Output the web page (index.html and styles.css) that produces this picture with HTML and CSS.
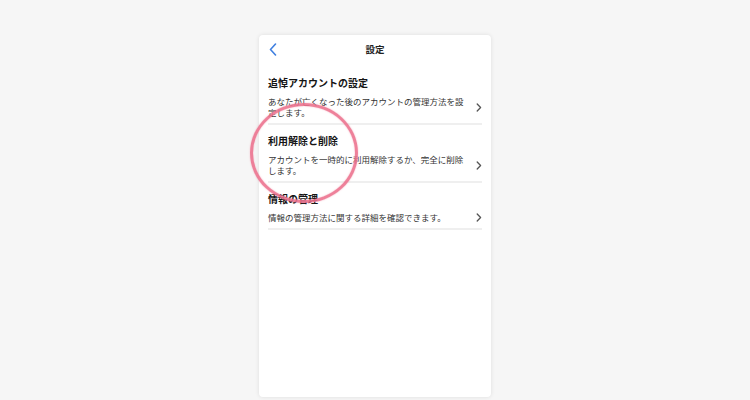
FILE: index.html
```html
<!DOCTYPE html>
<html lang="ja">
<head>
<meta charset="utf-8">
<link rel="stylesheet" href="styles.css">
</head>
<body>
<div class="card">
  <div class="header">
    <svg class="back" width="8" height="13" viewBox="0 0 8 13"><path d="M6.5 1 L1.5 6.5 L6.5 12" fill="none" stroke="#3f7fe0" stroke-width="1.6" stroke-linecap="round" stroke-linejoin="round"/></svg>
    <div class="htitle">設定</div>
  </div>
  <div class="list">
    <div class="item">
      <div class="title">追悼アカウントの設定</div>
      <div class="row">
        <div class="desc">あなたが亡くなった後のアカウントの管理方法を設定します。</div>
        <svg class="chev" width="6" height="9" viewBox="0 0 6 9"><path d="M1.2 1 L4.6 4.5 L1.2 8" fill="none" stroke="#555" stroke-width="1.3" stroke-linecap="round" stroke-linejoin="round"/></svg>
      </div>
    </div>
    <div class="item">
      <div class="title">利用解除と削除</div>
      <div class="row">
        <div class="desc">アカウントを一時的に利用解除するか、完全に削除します。</div>
        <svg class="chev" width="6" height="9" viewBox="0 0 6 9"><path d="M1.2 1 L4.6 4.5 L1.2 8" fill="none" stroke="#555" stroke-width="1.3" stroke-linecap="round" stroke-linejoin="round"/></svg>
      </div>
    </div>
    <div class="item">
      <div class="title">情報の管理</div>
      <div class="row">
        <div class="desc">情報の管理方法に関する詳細を確認できます。</div>
        <svg class="chev" width="6" height="9" viewBox="0 0 6 9"><path d="M1.2 1 L4.6 4.5 L1.2 8" fill="none" stroke="#555" stroke-width="1.3" stroke-linecap="round" stroke-linejoin="round"/></svg>
      </div>
    </div>
  </div>
  <div class="ring"></div>
</div>
</body>
</html>
```

FILE: styles.css
```css
html, body {
  margin: 0;
  padding: 0;
  background: #f6f6f6;
  font-family: "Noto Sans CJK JP", "Noto Sans", sans-serif;
}
body {
  padding-top: 35px;
  height: 400px;
  box-sizing: border-box;
  overflow: hidden;
}
.card {
  position: relative;
  width: 232px;
  height: 362px;
  margin: 0 auto;
  background: #fff;
  border-radius: 4px;
  box-shadow: 0 0 4px rgba(0,0,0,0.1);
}
.header {
  position: relative;
  height: 28px;
  display: flex;
  align-items: center;
  justify-content: center;
}
.back {
  position: absolute;
  left: 10px;
  top: 8px;
}
.htitle {
  font-size: 9.5px;
  font-weight: 700;
  color: #222;
  line-height: 14px;
}
.list {
  margin-top: 4px;
  padding: 0 9px;
}
.item {
  padding: 9px 0 5px;
  border-bottom: 2px solid #efefef;
}
.title {
  font-size: 10px;
  font-weight: 700;
  color: #151515;
  line-height: 14px;
  margin-bottom: 6px;
}
.row {
  display: flex;
  align-items: center;
  justify-content: space-between;
}
.desc {
  width: 200px;
  font-size: 8.5px;
  line-height: 11px;
  color: #333;
}
.ring {
  position: absolute;
  left: -9px;
  top: 68px;
  width: 108px;
  height: 100px;
  box-sizing: border-box;
  border: 3px solid rgba(236, 112, 140, 0.88);
  border-radius: 50%;
  box-shadow: 0 0 1.5px rgba(236,112,140,0.6), inset 0 0 1.5px rgba(236,112,140,0.6);
  pointer-events: none;
}
```
